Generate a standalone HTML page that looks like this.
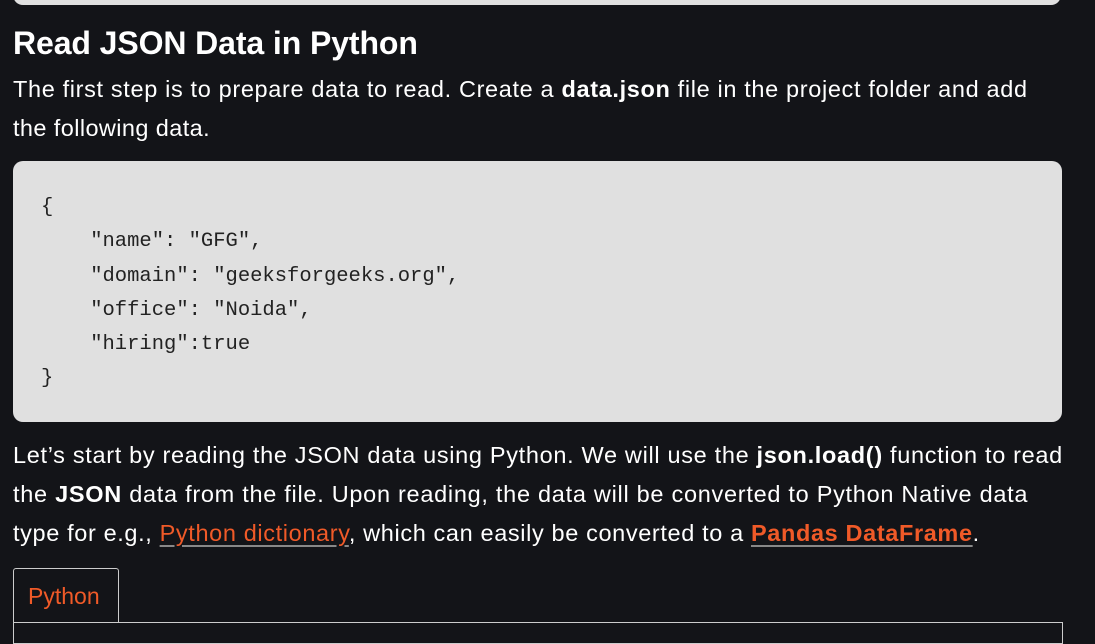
<!DOCTYPE html>
<html><head><meta charset="utf-8"><style>
body{margin:0;background:#131418;width:1095px;height:632px;overflow:hidden;font-family:"Liberation Sans",sans-serif;color:#fff;position:relative}
.top{position:absolute;left:13px;top:-20px;width:1048px;height:25px;background:#e0e0e0;border-radius:10px}
h2{position:absolute;left:13px;top:25px;margin:0;font-size:32px;font-weight:bold;letter-spacing:-0.1px}
p{position:absolute;left:13px;margin:0;font-size:23.5px;line-height:39px;white-space:nowrap;letter-spacing:-0.1px}
.code{position:absolute;left:13px;top:161px;width:1049px;height:261px;background:#e0e0e0;border-radius:10px;color:#222;font-family:"Liberation Mono",monospace;font-size:20.5px;line-height:34.3px}
.code pre{margin:0;position:absolute;left:28px;font:inherit}
a{color:#f05a28;text-decoration:underline;text-decoration-color:#888;text-underline-offset:4px}
.tab{position:absolute;left:13px;top:568px;width:104px;height:54px;border:1px solid #ccc;border-bottom:none;border-radius:3px 3px 0 0;color:#f05a28;font-size:23px;line-height:54px;text-indent:14px}
.pane{position:absolute;left:13px;top:622px;width:1048px;height:20px;border:1px solid #ccc}
</style></head><body>
<div class="top"></div>
<h2>Read JSON Data in Python</h2>
<p style="top:70px"><span style="letter-spacing:0.65px">The first step is to prepare data to read. Create a <b>data.json</b> file in the project folder and add</span><br><span style="letter-spacing:0.4px">the following data.</span></p>
<div class="code"><pre style="top:30px">{
    "name": "GFG",
    "domain": "geeksforgeeks.org",
    "office": "Noida",
    "hiring":true
}</pre></div>
<p style="top:436px"><span style="letter-spacing:0.68px">Let’s start by reading the JSON data using Python. We will use the <b>json.load()</b> function to read</span><br><span style="letter-spacing:0.72px">the <b>JSON</b> data from the file. Upon reading, the data will be converted to Python Native data</span><br><span style="letter-spacing:0.63px">type for e.g., <a>Python dictionary</a>, which can easily be converted to a <a><b>Pandas DataFrame</b></a>.</span></p>
<div class="tab">Python</div>
<div class="pane"></div>
</body></html>
